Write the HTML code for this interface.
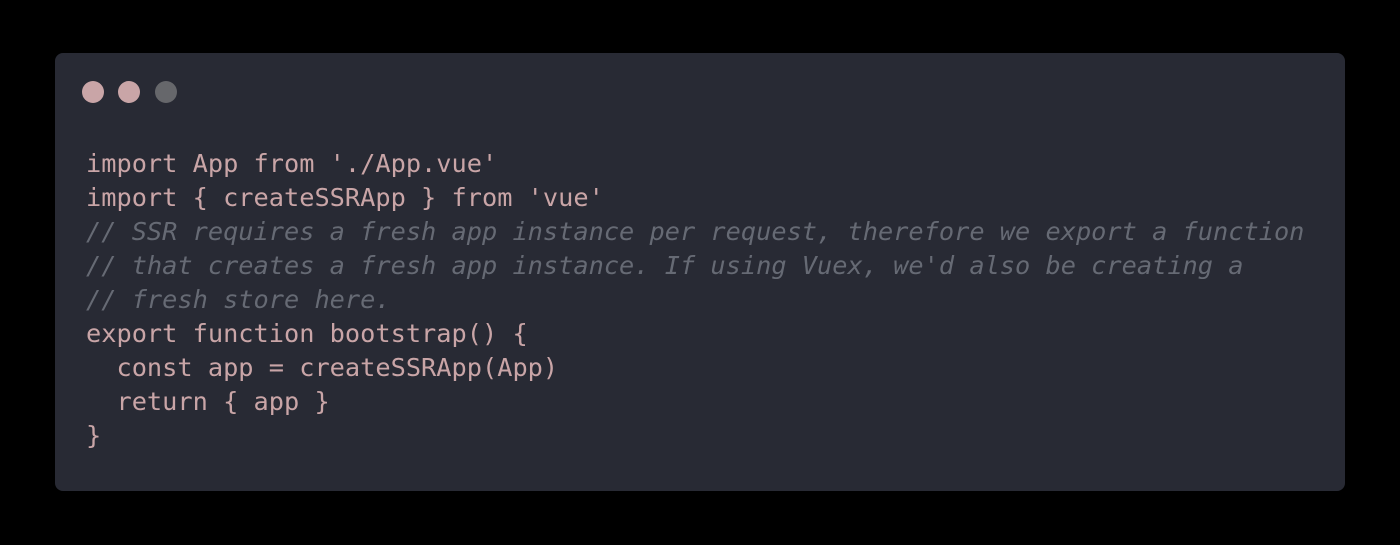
<!DOCTYPE html>
<html><head><style>
html,body{margin:0;padding:0;background:#000;width:1400px;height:545px;overflow:hidden}
.card{position:absolute;left:55px;top:53px;width:1290px;height:438px;background:#282a34;border-radius:8px}
.dot{position:absolute;top:28px;width:22px;height:22px;border-radius:50%}
pre{position:absolute;left:31px;top:94px;margin:0;font-family:"DejaVu Sans Mono",monospace;font-size:25.3px;line-height:34px;color:#c9a5a7}
.c{color:#666a74;font-style:italic}
</style></head><body>
<div class="card">
<div class="dot" style="left:27px;background:#c9a5a7"></div>
<div class="dot" style="left:63px;background:#c9a5a7"></div>
<div class="dot" style="left:100px;background:#66676b"></div>
<pre>import App from './App.vue'
import { createSSRApp } from 'vue'
<span class="c">// SSR requires a fresh app instance per request, therefore we export a function</span>
<span class="c">// that creates a fresh app instance. If using Vuex, we'd also be creating a</span>
<span class="c">// fresh store here.</span>
export function bootstrap() {
  const app = createSSRApp(App)
  return { app }
}</pre>
</div>
</body></html>
